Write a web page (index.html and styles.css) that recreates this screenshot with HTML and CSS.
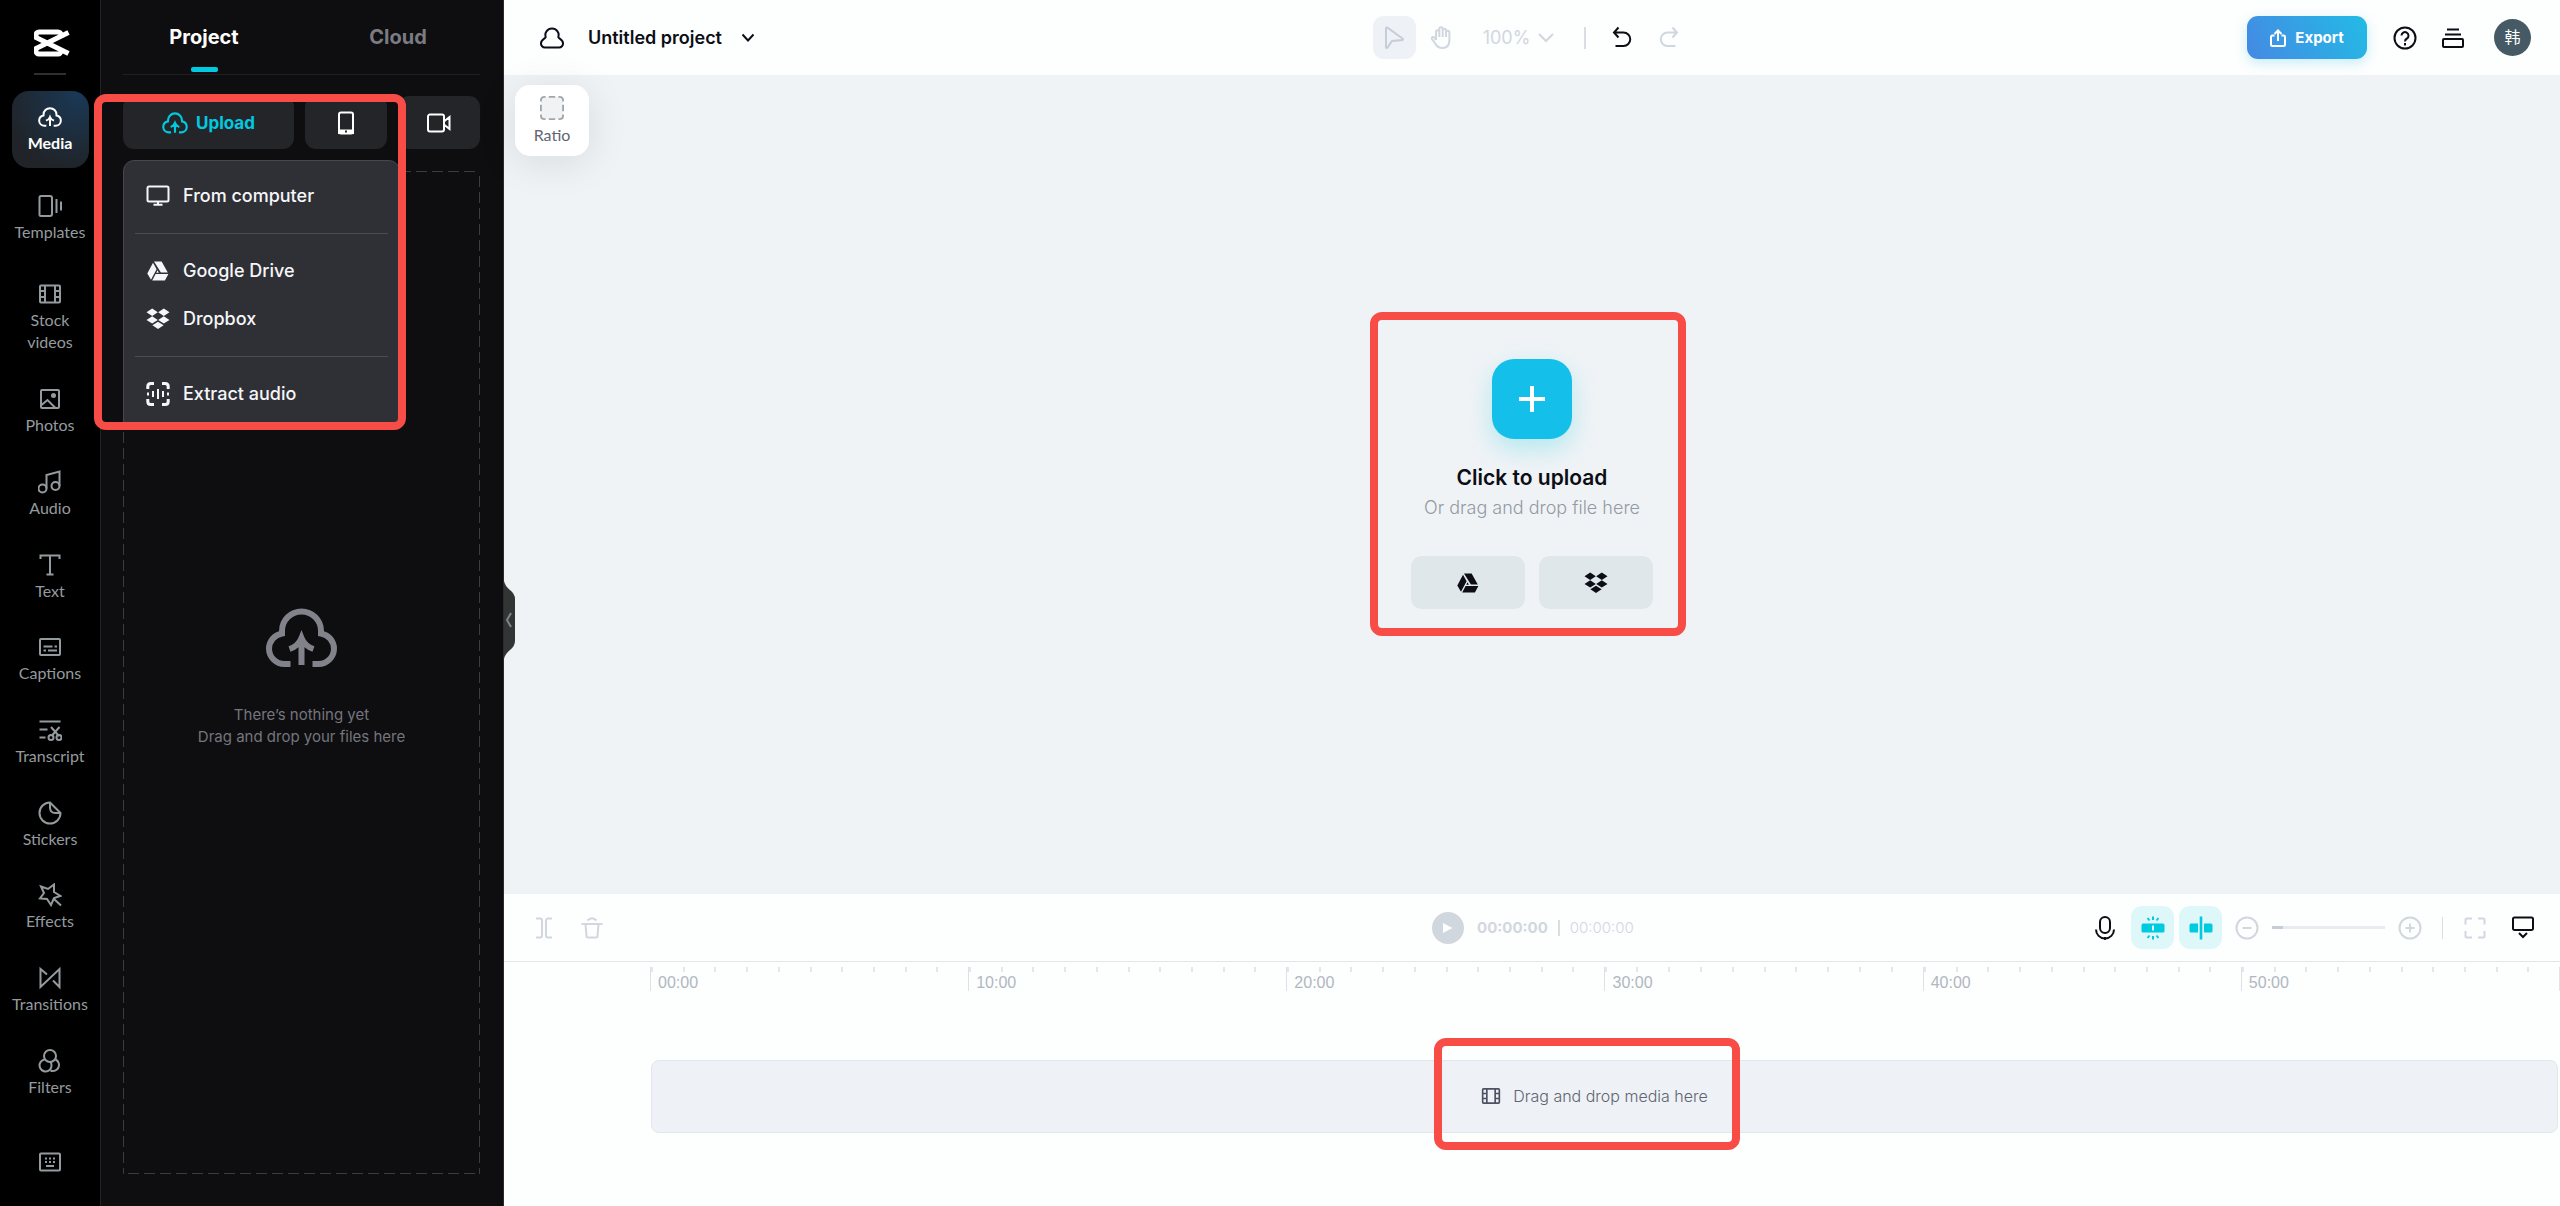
FILE: index.html
```html
<!DOCTYPE html>
<html lang="en">
<head>
    <meta charset="utf-8">
    <title>Untitled project</title>
    <link rel="stylesheet" href="styles.css">
</head>
<body>
    <!-- shared icons -->
    <svg class="sprite">
        <symbol id="cloud-up" viewBox="0 0 72 60">
            <path d="M25 56H19A15.500 15.500 0 0 1 3.500 41C3.500 33 9 27 16.500 25.500V23A19.500 19.500 0 0 1 55.500 23V25.500C63 27 68.500 33 68.500 41A15.500 15.500 0 0 1 53 56H47M36 57V31M24 41C30 39 34 35 36 30C38 35 42 39 48 41"/>
        </symbol>
        <symbol id="drive" viewBox="0 0 24 24">
            <path fill="currentColor" stroke="none" d="M8 2.500h7.600l6.200 11h-6.900zM7 3.800l3.600 6.400-5.600 10.600L1.300 14.400zM9.600 15h12.800l-3.500 6.400H6.200zM11.500 11.300l1.400 2.400h-2.600z"/>
        </symbol>
        <symbol id="dropbox" viewBox="0 0 24 24">
            <path fill="currentColor" stroke="none" d="M6.200 1.600l5.600 3.700-5.600 3.700L.5 5.300zM17.800 1.600l5.700 3.700L17.800 9l-5.600-3.700zM6.200 9.200l5.600 3.700-5.600 3.700-5.700-3.700zM17.800 9.200l5.700 3.700-5.700 3.700-5.600-3.700zM12 14.700l5.600 3.600L12 22l-5.600-3.700z"/>
        </symbol>
        <symbol id="film" viewBox="0 0 24 24">
            <path d="M3 3.500h18a1 1 0 0 1 1 1v15a1 1 0 0 1-1 1H3a1 1 0 0 1-1-1v-15a1 1 0 0 1 1-1zM7 3.500v17M17 3.500v17M2 9h5M2 15h5M17 9h5M17 15h5"/>
        </symbol>
    </svg>

    <div class="app">
        <aside class="rail">
            <div class="logo">
                <svg viewBox="0 0 36 28" width="36" height="28"><path d="M27 8V6a3 3 0 0 0-3-3H5a3 3 0 0 0-3 3v2.500L34.500 24.500M27 20v2a3 3 0 0 1-3 3H5a3 3 0 0 1-3-3v-2.500L34.500 3.500"/></svg>
            </div>
            <nav class="nav">
                <button class="nav-item active spaced"><svg class="icon"><use href="#cloud-up"/></svg>Media</button>
                <button class="nav-item spaced"><svg class="icon" viewBox="0 0 24 24"><path d="M3 2h9a2 2 0 0 1 2 2v16a2 2 0 0 1-2 2H3a1.500 1.500 0 0 1-1.500-1.500V3.500A1.500 1.500 0 0 1 3 2zM18.500 5v14M23 7.500v9"/></svg>Templates</button>
                <button class="nav-item"><svg class="icon"><use href="#film"/></svg>Stock<br>videos</button>
                <button class="nav-item"><svg class="icon" viewBox="0 0 24 24"><path d="M4 3h16a1 1 0 0 1 1 1v16a1 1 0 0 1-1 1H4a1 1 0 0 1-1-1V4a1 1 0 0 1 1-1zM3.500 18l6-5 8 8"/><circle cx="15.500" cy="8.500" r="1.500" fill="currentColor"/></svg>Photos</button>
                <button class="nav-item"><svg class="icon" viewBox="0 0 24 24"><path d="M8.500 18.500V5l13-3.500v14.500"/><circle cx="4.500" cy="18.500" r="4"/><circle cx="17.500" cy="16" r="4"/></svg>Audio</button>
                <button class="nav-item"><svg class="icon" viewBox="0 0 24 24"><path d="M2.500 6V2.500h19V6M12 2.500v19M8.500 21.500h7"/></svg>Text</button>
                <button class="nav-item"><svg class="icon" viewBox="0 0 24 24"><path d="M3 4h18a1 1 0 0 1 1 1v14a1 1 0 0 1-1 1H3a1 1 0 0 1-1-1V5a1 1 0 0 1 1-1zM5.500 11.500h9M16.500 11.500h2.500M5.500 15.500H8M10 15.500h9"/></svg>Captions</button>
                <button class="nav-item"><svg class="icon" viewBox="0 0 24 24"><path d="M1.500 3.500h21M1.500 11.500h8M1.500 19.500h6M13 9l8 9M21.500 9l-8 9"/><circle cx="13" cy="19.500" r="2.500"/><circle cx="21" cy="19.500" r="2.500"/></svg>Transcript</button>
                <button class="nav-item"><svg class="icon" viewBox="0 0 24 24"><path d="M12 1.500A10.500 10.500 0 1 0 22.500 12zM12 1.500v5q0 5.500 5.500 5.500h5"/></svg>Stickers</button>
                <button class="nav-item"><svg class="icon" viewBox="0 0 24 24"><path d="M3 3.500l7 2.500 6-4.500v7.500l6.500 4-6.500 2-3 7-4-6-7-.5 4-5.500zM16 16l7 6.500"/></svg>Effects</button>
                <button class="nav-item"><svg class="icon" viewBox="0 0 24 24"><path d="M9 8.500L2.500 3v18l19-18v18L15 14.500"/></svg>Transitions</button>
                <button class="nav-item"><svg class="icon" viewBox="0 0 24 24"><circle cx="12" cy="7" r="6"/><path d="M6.500 10.500A6 6 0 1 0 13.500 16Q13.500 14 12 12.500M17.500 10.500a6 6 0 1 1-5 11"/></svg>Filters</button>
            </nav>
            <button class="shortcuts" aria-label="Keyboard shortcuts"><svg class="icon" viewBox="0 0 24 24"><path d="M3 3.500h18a1 1 0 0 1 1 1v15a1 1 0 0 1-1 1H3a1 1 0 0 1-1-1v-15a1 1 0 0 1 1-1zM7 8.500h2M11 8.500h2M15 8.500h2M7 12h2M11 12h2M15 12h2M8 16h8"/></svg></button>
        </aside>

        <section class="panel">
            <div class="tabs">
                <button class="tab selected">Project</button>
                <button class="tab">Cloud</button>
            </div>
            <div class="panel-body">
                <div class="sources">
                    <button class="source upload"><svg class="icon"><use href="#cloud-up"/></svg>Upload</button>
                    <button class="source" aria-label="From phone"><svg class="icon" viewBox="0 0 24 24"><path d="M7 1.500h10a2 2 0 0 1 2 2v17a2 2 0 0 1-2 2H7a2 2 0 0 1-2-2v-17a2 2 0 0 1 2-2z"/><path d="M5 19.500h14v2.500H5z" fill="currentColor"/><path d="M11 20.500h2" stroke="#242529"/></svg></button>
                    <button class="source" aria-label="Record"><svg class="icon" viewBox="0 0 24 24"><path d="M3 3.500h12a2 2 0 0 1 2 2v13a2 2 0 0 1-2 2H3a2 2 0 0 1-2-2v-13a2 2 0 0 1 2-2zM17.500 10l5-4v12l-5-4"/></svg></button>
                    <div class="menu">
                        <button class="menu-item"><svg class="icon" viewBox="0 0 24 24"><path d="M3 2.500h18a1.500 1.500 0 0 1 1.500 1.500v12a1.500 1.500 0 0 1-1.500 1.500H3A1.500 1.500 0 0 1 1.500 16V4A1.500 1.500 0 0 1 3 2.500zM12 18v2.500M7.500 20.800h9"/></svg>From computer</button>
                        <hr>
                        <button class="menu-item"><svg class="icon"><use href="#drive"/></svg>Google Drive</button>
                        <button class="menu-item"><svg class="icon"><use href="#dropbox"/></svg>Dropbox</button>
                        <hr>
                        <button class="menu-item"><svg class="icon bold" viewBox="0 0 24 24"><path d="M1.800 7V4.500q0-3 3-3H8M16 1.500h3.200q3 0 3 3V7M22.200 17v2.500q0 3-3 3H16M8 22.500H4.800q-3 0-3-3V17"/><path stroke-width="2" d="M2 10.500v3M7 9v6M12 7v10M17 9v6M22 10.500v3"/></svg>Extract audio</button>
                    </div>
                    <div class="mark mark-menu"></div>
                </div>
                <div class="dropzone">
                    <svg class="cloud-large"><use href="#cloud-up"/></svg>
                    <p>There’s nothing yet<br>Drag and drop your files here</p>
                </div>
            </div>
            <button class="collapse" aria-label="Collapse panel"><svg viewBox="0 0 12 78" width="12" height="78"><path d="M0 0q1 5 6 9 5 4 5 9v42q0 5-5 9-5 4-6 9z" fill="#333535"/><path d="M7 32l-4 7 4 7" fill="none" stroke="#7b858c" stroke-width="2"/></svg></button>
        </section>

        <main class="editor">
            <header class="topbar">
                <div class="project">
                    <svg class="icon" viewBox="0 0 24 24"><path d="M12 2.500a6.500 6.500 0 0 1 6.300 8.500c.5 2 4.700 2 4.700 6.200a4 4 0 0 1-4 4.300H5a4 4 0 0 1-4-4.300c0-4.200 4.200-4.200 4.700-6.200A6.500 6.500 0 0 1 12 2.500z"/></svg>
                    <h1>Untitled project</h1>
                    <svg class="chevron" viewBox="0 0 12 12"><path d="M.5 2.500L6 8.500l5.500-6"/></svg>
                </div>
                <div class="tools">
                    <button class="tool on" aria-label="Select"><svg class="icon" viewBox="0 0 24 24"><path d="M4 2.500v19q.5 1 1.500 0l4.500-6.500 10.500-1q1-.7 0-1.500L5.500 1.700Q4.200 1.300 4 2.500z"/></svg></button>
                    <button class="tool" aria-label="Hand"><svg class="icon" viewBox="0 0 24 24"><path d="M7 14V5.500a1.700 1.700 0 0 1 3.300 0V11M10.300 5V3a1.700 1.700 0 0 1 3.400 0v8M13.700 4a1.700 1.700 0 0 1 3.300 0v7M17 6.500a1.700 1.700 0 0 1 3.400 0V14c0 5-2.500 8-7 8-4 0-6-2-7.500-5l-3-4c-.8-2 1.200-2.500 2.500-1.500L7 14"/></svg></button>
                    <button class="zoom">100%<svg class="chevron" viewBox="0 0 16 12"><path d="M1 2l7 7 7-7"/></svg></button>
                    <span class="bar"></span>
                    <button class="tool dark" aria-label="Undo"><svg class="icon" viewBox="0 0 24 24"><path d="M8.500 1.500L4 6.500l4.500 5M4 6.500h9.500a6.500 6.500 0 0 1 0 13.500H5.500"/></svg></button>
                    <button class="tool" aria-label="Redo"><svg class="icon" viewBox="0 0 24 24"><path d="M15.500 1.500L20 6.500l-4.500 5M20 6.500h-9.500a6.500 6.500 0 0 0 0 13.500h8"/></svg></button>
                </div>
                <div class="actions">
                    <button class="export"><svg viewBox="0 0 16 18" width="16" height="18"><path d="M4.500 6.500H2.500A1.500 1.500 0 0 0 1 8v7.500A1.500 1.500 0 0 0 2.500 17h11a1.500 1.500 0 0 0 1.500-1.500V8a1.500 1.500 0 0 0-1.500-1.500h-2M8 12V2M4.500 5L8 1.500 11.500 5"/></svg>Export</button>
                    <button class="action" aria-label="Help"><svg class="icon" viewBox="0 0 24 24"><circle cx="12" cy="12" r="10.500"/><path d="M8.500 9.500a3.500 3.500 0 1 1 5.500 3q-2 1-2 3M12 17v2.500"/></svg></button>
                    <button class="action" aria-label="Queue"><svg class="icon" viewBox="0 0 24 24"><path d="M6 3.500h12M4 8.500h16M3 13h18a1 1 0 0 1 1 1v6a1 1 0 0 1-1 1H3a1 1 0 0 1-1-1v-6a1 1 0 0 1 1-1z"/></svg></button>
                    <span class="avatar">韩</span>
                </div>
            </header>

            <div class="stage">
                <button class="ratio"><svg class="icon" viewBox="0 0 26 26"><rect x="1" y="1" width="24" height="24" rx="4" fill="#f0f2f4" stroke="none"/><path d="M1 6V5q0-4 4-4h1M9.500 1h7M20 1h1q4 0 4 4v1M25 9.500v7M25 20v1q0 4-4 4h-1M16.500 25h-7M6 25H5q-4 0-4-4v-1M1 16.500v-7"/></svg>Ratio</button>
                <div class="uploader">
                    <button class="plus" aria-label="Upload"><svg viewBox="0 0 28 28" width="28" height="28"><path d="M14 1v26M1 14h26"/></svg></button>
                    <h2>Click to upload</h2>
                    <p>Or drag and drop file here</p>
                    <div class="providers">
                        <button class="provider" aria-label="Google Drive"><svg class="icon"><use href="#drive"/></svg></button>
                        <button class="provider" aria-label="Dropbox"><svg class="icon"><use href="#dropbox"/></svg></button>
                    </div>
                    <div class="mark mark-uploader"></div>
                </div>
            </div>

            <section class="timeline">
                <div class="controls">
                    <div class="edit">
                        <button class="tool" aria-label="Split"><svg class="icon" viewBox="0 0 24 24"><path d="M4 2.500h4a2 2 0 0 1 2 2v15a2 2 0 0 1-2 2H4M20 2.500h-4a2 2 0 0 0-2 2v15a2 2 0 0 0 2 2h4"/></svg></button>
                        <button class="tool" aria-label="Delete"><svg class="icon" viewBox="0 0 24 24"><path d="M1.500 8h21M5.500 8l1 12a1.500 1.500 0 0 0 1.500 1.500h8a1.500 1.500 0 0 0 1.500-1.500l1-12M7.500 4.500q4.500-4.500 9 0"/></svg></button>
                    </div>
                    <div class="playback">
                        <button class="play" aria-label="Play"><svg viewBox="0 0 10 12" width="10" height="12"><path d="M0 1v10l9.500-5z" fill="#fff"/></svg></button>
                        <strong>00:00:00</strong><span class="bar"></span><span class="total">00:00:00</span>
                    </div>
                    <div class="view">
                        <button class="tool dark" aria-label="Record voice"><svg class="icon" viewBox="0 0 24 24"><path d="M12 1a5 5 0 0 1 5 5v6a5 5 0 0 1-10 0V6a5 5 0 0 1 5-5zM3 13.500a9 9 0 0 0 18 0M12 21v3"/></svg></button>
                        <button class="tool cyan" aria-label="Auto snapping"><svg class="icon" viewBox="0 0 24 24"><path fill="currentColor" stroke="none" fill-rule="evenodd" d="M2 7.500h20a1.500 1.500 0 0 1 1.500 1.500v6a1.500 1.500 0 0 1-1.500 1.500H2A1.500 1.500 0 0 1 .5 15V9A1.500 1.500 0 0 1 2 7.500zM11 9.500v5h2v-5z"/><path d="M12 .5v3.500M6.500 2l2 2.500M17.500 2l-2 2.500M12 20v3.500M6.500 22l2-2.500M17.500 22l-2-2.500"/></svg></button>
                        <button class="tool cyan" aria-label="Magnet track"><svg class="icon" viewBox="0 0 24 24"><path fill="currentColor" stroke="none" d="M2 7.500h7v9H2A1.500 1.500 0 0 1 .5 15V9A1.500 1.500 0 0 1 2 7.500zM15 7.500h7A1.500 1.500 0 0 1 23.500 9v6a1.500 1.500 0 0 1-1.500 1.500h-7zM10.700.5h2.600v23h-2.600z"/></svg></button>
                        <button class="tool small" aria-label="Zoom out"><svg class="icon" viewBox="0 0 24 24"><circle cx="12" cy="12" r="10.500"/><path d="M7.500 12h9"/></svg></button>
                        <input class="slider" type="range" value="0" aria-label="Timeline zoom">
                        <button class="tool small" aria-label="Zoom in"><svg class="icon" viewBox="0 0 24 24"><circle cx="12" cy="12" r="10.500"/><path d="M7.500 12h9M12 7.500v9"/></svg></button>
                        <span class="bar thin"></span>
                        <button class="tool" aria-label="Fit"><svg class="icon" viewBox="0 0 24 24"><path d="M2.500 8.500V4A1.500 1.500 0 0 1 4 2.500h5M15 2.500h5A1.500 1.500 0 0 1 21.500 4v4.500M21.500 15v5a1.500 1.500 0 0 1-1.500 1.500h-5M9 21.500H4A1.500 1.500 0 0 1 2.500 20v-5"/></svg></button>
                        <button class="tool dark" aria-label="Hide timeline"><svg class="icon" viewBox="0 0 24 24"><path d="M3.500 1.500h17A1.500 1.500 0 0 1 22 3v9.500a1.500 1.500 0 0 1-1.500 1.500h-17A1.500 1.500 0 0 1 2 12.500V3a1.500 1.500 0 0 1 1.500-1.500zM8 17l4 4 4-4"/></svg></button>
                    </div>
                </div>
                <div class="ruler">
                    <span>00:00</span>
                    <span>10:00</span>
                    <span>20:00</span>
                    <span>30:00</span>
                    <span>40:00</span>
                    <span>50:00</span>
                </div>
                <div class="track">
                    <div class="hint"><svg class="icon"><use href="#film"/></svg>Drag and drop media here<div class="mark mark-track"></div></div>
                </div>
            </section>
        </main>
    </div>
</body>
</html>
```

FILE: styles.css
```css
* {
    box-sizing: border-box;
}
body {
    margin: 0;
    font-family: Inter, "Noto Sans CJK SC", sans-serif;
    font-size: 16px;
    line-height: 22px;
    color: #0c0d15;
}
h1, h2, p {
    margin: 0;
}
button {
    display: flex;
    align-items: center;
    justify-content: center;
    padding: 0;
    border: none;
    background: none;
    font: inherit;
    color: inherit;
    cursor: pointer;
}
svg {
    flex: none;
    fill: none;
    stroke: currentColor;
    stroke-width: 2;
}
.sprite {
    display: none;
}
.icon {
    width: 24px;
    height: 24px;
}
#cloud-up {
    stroke-width: 6;
}
.app {
    display: flex;
    height: 100vh;
}

/* left rail */
.rail {
    display: flex;
    flex-direction: column;
    align-items: center;
    width: 101px;
    background: #000;
    border-right: 1px solid #222326;
    font-family: Lato, sans-serif;
    color: #949b9f;
}
.logo {
    width: 32px;
    height: 75px;
    margin-bottom: 16px;
    padding-top: 29px;
    border-bottom: 2px solid #2e2f31;
    color: #fff;
}
.logo svg {
    stroke-width: 5;
}
.nav {
    flex: 1;
    display: flex;
    flex-direction: column;
    justify-content: space-between;
}
.nav-item {
    flex-direction: column;
    gap: 3px;
    width: 77px;
    padding: 14px 0;
}
.nav-item.spaced {
    margin-bottom: 6px;
}
.nav-item.active {
    border-radius: 17px;
    background: radial-gradient(circle at 85% 5%, #1a3855, #202429 75%);
    color: #fff;
    font-weight: bold;
}
.shortcuts {
    height: 94px;
    padding-top: 6px;
}

/* media panel */
.panel {
    position: relative;
    display: flex;
    flex-direction: column;
    width: 403px;
    background: #0e0e10;
    border-right: 1px solid #2a2b2d;
}
.tabs {
    display: grid;
    grid-template-columns: 1fr 1fr;
    height: 74px;
    padding: 0 8px 0 6px;
}
.tab {
    position: relative;
    font-size: 20px;
    font-weight: bold;
    color: #7b7b83;
}
.tab.selected {
    color: #fff;
}
.tab.selected::after {
    content: "";
    position: absolute;
    bottom: 2px;
    width: 27px;
    height: 5px;
    border-radius: 2px;
    background: #00cae0;
}
.panel-body {
    flex: 1;
    display: flex;
    flex-direction: column;
    gap: 22px;
    margin: 0 23px 0 22px;
    padding: 21px 0 32px;
    border-top: 1px solid #1f2022;
}
.sources {
    position: relative;
    display: grid;
    grid-template-columns: 1fr 82px 82px;
    gap: 11px;
}
.source {
    gap: 8px;
    height: 53px;
    border-radius: 11px;
    background: #242529;
    color: #fff;
}
.source.upload {
    font-size: 17px;
    font-weight: bold;
    color: #00cae0;
}
.upload .icon {
    width: 26px;
}
.menu {
    position: absolute;
    z-index: 1;
    top: 64px;
    left: 0;
    width: 277px;
    padding: 11px;
    border: 1px solid #46474c;
    border-radius: 11px;
    background: #2f3035;
}
.menu hr {
    margin: 13px 0;
    border: none;
    border-top: 1px solid #4b4c51;
}
.menu-item {
    gap: 13px;
    height: 48px;
    padding-left: 11px;
    font-size: 18px;
    font-weight: 500;
    color: #f5f6fa;
}
.icon.bold {
    stroke-width: 3;
}
.mark {
    position: absolute;
    z-index: 2;
    border: 8px solid #f84c47;
    border-radius: 12px;
    pointer-events: none;
}
.mark-menu {
    top: -2px;
    left: -29px;
    width: 312px;
    height: 336px;
}
.dropzone {
    --dash: transparent 0 5px, #3a3b3e 5px 16px;
    flex: 1;
    display: flex;
    flex-direction: column;
    align-items: center;
    justify-content: center;
    gap: 36px;
    padding-top: 11px;
    text-align: center;
    font-size: 15px;
    color: #75757d;
    background:
        repeating-linear-gradient(to right, var(--dash)) top / 100% 1px no-repeat,
        repeating-linear-gradient(to right, var(--dash)) bottom / 100% 1px no-repeat,
        repeating-linear-gradient(to bottom, var(--dash)) left / 1px 100% no-repeat,
        repeating-linear-gradient(to bottom, var(--dash)) right / 1px 100% no-repeat;
}
.cloud-large {
    width: 73px;
    height: 60px;
    color: #82828a;
}
.collapse {
    position: absolute;
    top: 581px;
    right: -13px;
    z-index: 1;
}
.collapse svg {
    stroke: none;
}

/* top bar */
.editor {
    flex: 1;
    display: flex;
    flex-direction: column;
    min-width: 0;
    background: #fdfefe;
}
.topbar {
    display: grid;
    grid-template-columns: 1fr auto 1fr;
    align-items: center;
    height: 75px;
    padding: 0 29px 0 36px;
}
.project {
    display: flex;
    align-items: center;
}
.project .icon {
    margin-right: 24px;
}
.chevron {
    width: 12px;
    height: 12px;
}
h1 {
    margin-right: 20px;
    font-size: 18px;
    font-weight: 600;
}
.tools {
    display: flex;
    align-items: center;
    gap: 4px;
    margin-right: 8px;
    color: #d1d7df;
}
.tool {
    width: 43px;
    height: 43px;
    border-radius: 11px;
    color: #d1d7df;
}
.tool.on {
    background: #eef1f5;
    color: #c5cdd6;
}
.tool.dark {
    color: #0c0d15;
}
.tool.cyan {
    background: #def8fa;
    color: #00cae0;
}
.zoom {
    gap: 8px;
    margin-left: 16px;
    font-size: 18px;
}
.zoom .chevron {
    width: 16px;
}
.bar {
    width: 2px;
    height: 22px;
    background: #d9dee5;
}
.tools .bar {
    margin: 0 10px 0 26px;
}
.actions {
    display: flex;
    align-items: center;
    justify-content: flex-end;
    gap: 24px;
}
.export {
    gap: 9px;
    width: 120px;
    height: 43px;
    margin-right: 2px;
    border-radius: 11px;
    background: linear-gradient(60deg, #4589e4, #23bbe5);
    box-shadow: 0 4px 12px rgba(35, 187, 229, .25);
    font-size: 15px;
    font-weight: bold;
    color: #fff;
}
.avatar {
    width: 37px;
    height: 37px;
    margin-left: 5px;
    border-radius: 50%;
    background: #455a64;
    line-height: 36px;
    text-align: center;
    color: #fff;
}

/* stage */
.stage {
    position: relative;
    flex: 1;
    display: flex;
    align-items: center;
    justify-content: center;
    padding-bottom: 1px;
    background: #eff3f6;
}
.ratio {
    position: absolute;
    top: 10px;
    left: 11px;
    flex-direction: column;
    gap: 4px;
    width: 74px;
    height: 71px;
    border-radius: 15px;
    background: #fff;
    box-shadow: 0 6px 40px rgba(0, 20, 20, .1);
    font-family: Lato, sans-serif;
    color: #5f6572;
}
.ratio .icon {
    color: #a1a6ad;
}
.uploader {
    position: relative;
    display: flex;
    flex-direction: column;
    align-items: center;
}
.plus {
    width: 80px;
    height: 80px;
    margin-bottom: 28px;
    border-radius: 22px;
    background: #14c0ea;
    box-shadow: 0 10px 24px rgba(0, 202, 224, .25);
    color: #fff;
}
.plus svg {
    stroke-width: 4;
}
h2 {
    margin-bottom: 8px;
    font-size: 21px;
    line-height: 22px;
    font-weight: 600;
}
.uploader p {
    margin-bottom: 37px;
    font-size: 18px;
    font-weight: 300;
    color: #939aa2;
}
.providers {
    display: flex;
    gap: 14px;
}
.provider {
    width: 114px;
    height: 53px;
    border-radius: 11px;
    background: #e0e7ea;
}
.mark-uploader {
    inset: -47px -33px -27px -41px;
}

/* timeline */
.timeline {
    height: 312px;
}
.controls {
    display: grid;
    grid-template-columns: 1fr auto 1fr;
    align-items: center;
    height: 68px;
    padding: 0 16px 0 18px;
    border-bottom: 1px solid #e3e6e9;
}
.edit, .playback, .view {
    display: flex;
    align-items: center;
}
.edit {
    gap: 5px;
}
.playback {
    font-size: 15px;
    color: #d1d7df;
}
.play {
    width: 32px;
    height: 32px;
    margin-right: 13px;
    border-radius: 50%;
    background: #d1d7df;
}
.play svg {
    stroke: none;
}
.playback .bar {
    height: 16px;
    margin: 0 10px;
}
.total {
    font-weight: 300;
}
.view {
    justify-content: flex-end;
    gap: 5px;
}
.tool.small {
    width: 24px;
    margin: 0 8px;
}
.slider {
    appearance: none;
    width: 113px;
    height: 3px;
    margin: 0;
    background: linear-gradient(to right, #c5cdd6 10%, #e8ecf1 10%);
}
.slider::-webkit-slider-thumb {
    appearance: none;
    width: 1px;
    height: 3px;
}
.bar.thin {
    width: 1px;
    margin: 0 5px 0 7px;
}
.ruler {
    display: grid;
    grid-template-columns: repeat(6, 1fr);
    margin: 5px 0 0 146px;
    border-right: 1px solid #e0e4e8;
    font: 16px/22px "Liberation Sans", Arial, sans-serif;
    color: #b0b7c1;
}
.ruler span {
    height: 24px;
    padding: 5px 0 0 7px;
    border-left: 1px solid #dde1e6;
    background: repeating-linear-gradient(to right, #e3e6ea 0 2px, transparent 2px 10%) top / 100% 5px no-repeat;
}
.track {
    display: flex;
    align-items: center;
    justify-content: center;
    height: 73px;
    margin: 69px 2px 0 147px;
    padding: 0 20px 2px 0;
    border: 1px solid #e3e7ec;
    border-radius: 8px;
    background: #eef1f5;
}
.hint {
    position: relative;
    display: flex;
    align-items: center;
    gap: 12px;
    font-weight: 300;
    color: #5f6572;
}
.hint .icon {
    width: 20px;
    height: 20px;
    color: #4d5260;
}
.mark-track {
    inset: -47px -32px -43px -47px;
}
```
